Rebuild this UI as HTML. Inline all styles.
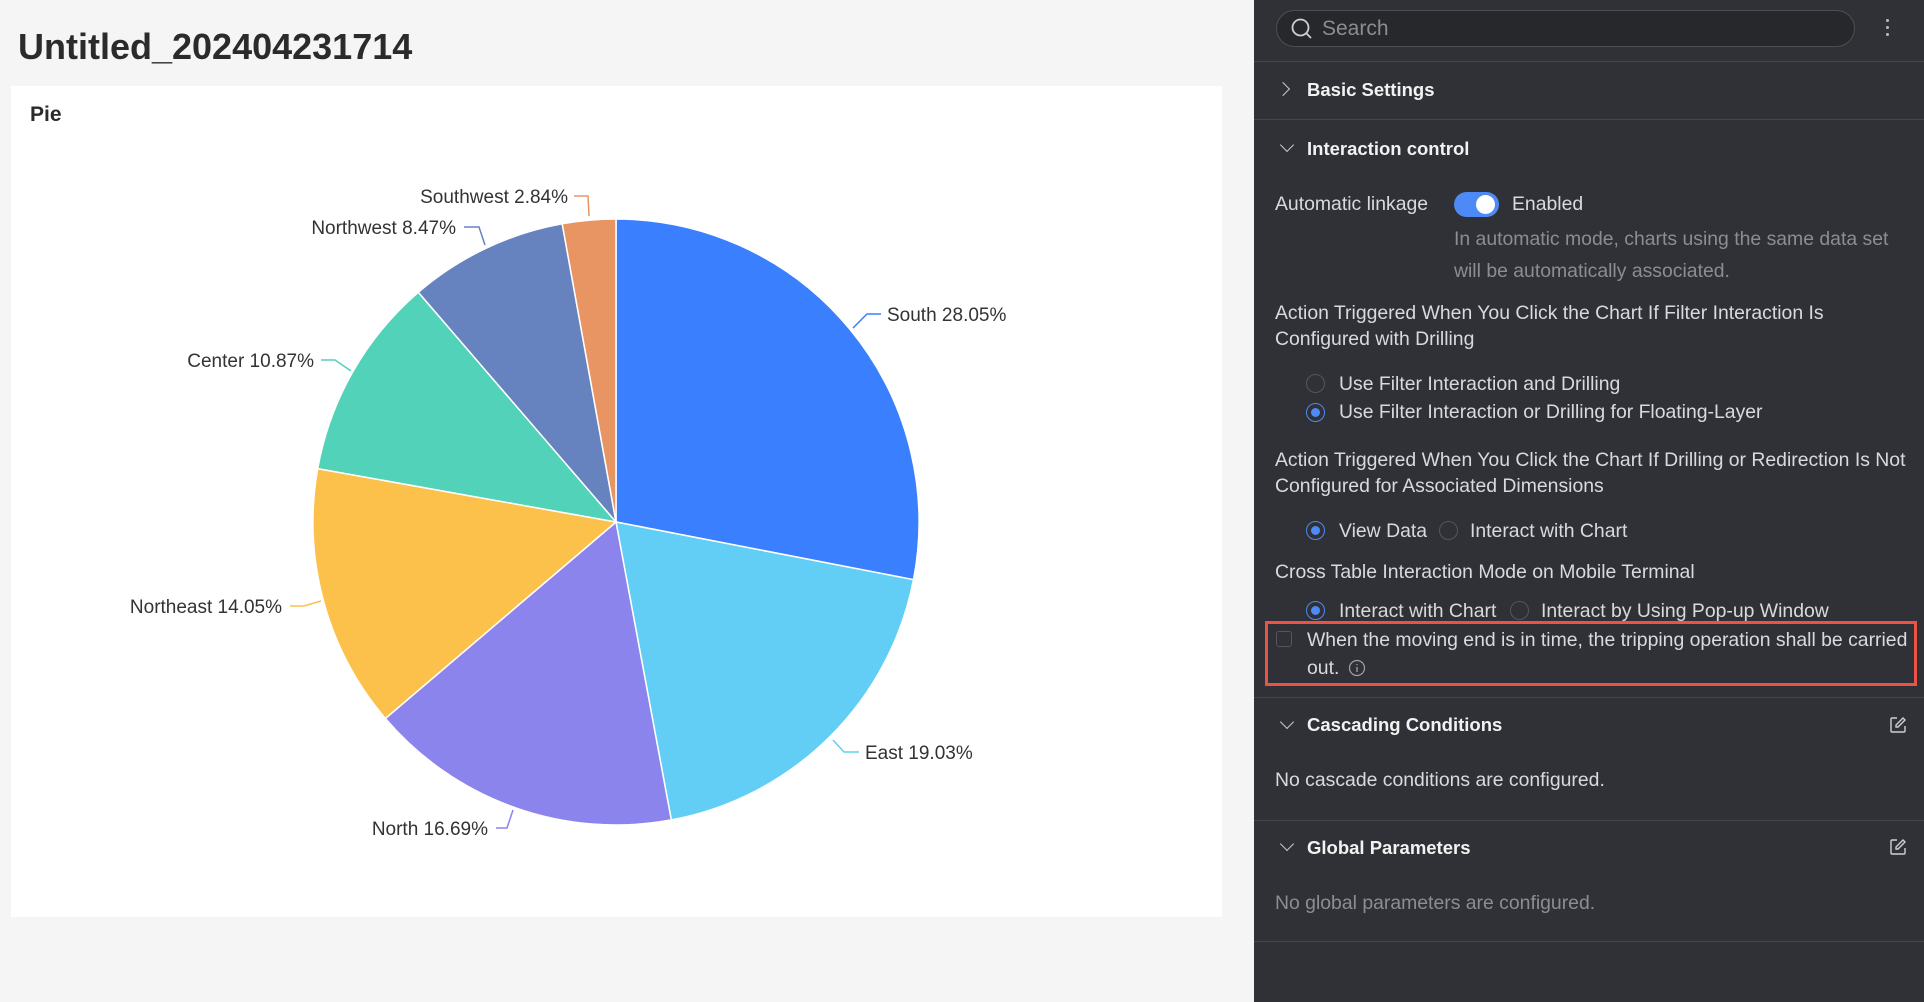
<!DOCTYPE html>
<html><head><meta charset="utf-8">
<style>
*{margin:0;padding:0;box-sizing:border-box}
body{width:1924px;height:1002px;overflow:hidden;background:#f5f5f5;font-family:"Liberation Sans",sans-serif;position:relative}
.a{position:absolute;white-space:nowrap;line-height:22px;height:22px}
#panel{position:absolute;left:1254px;top:0;width:670px;height:1002px;background:#303136}
#panel .a{color:#d9dadd;font-size:19.4px}
#panel .a.h{font-weight:bold;color:#f2f2f3;font-size:18.5px}
#panel .a.g{color:#8c8d92}
.ln{position:absolute;left:0;width:670px;height:1px;background:#45464b}
.rd{position:absolute;width:19px;height:19px;border-radius:50%;border:1.5px solid #55565b}
.rd.on{border-color:#4d8af6}
.rd.on::after{content:"";position:absolute;left:3.5px;top:3.5px;width:9px;height:9px;border-radius:50%;background:#4d8af6}
.chev{position:absolute;width:10px;height:10px;border-right:1.6px solid #c8c9cc;border-bottom:1.6px solid #c8c9cc}
</style></head><body>
<div class="a" style="left:18px;top:27px;height:40px;line-height:40px;font-size:36px;font-weight:bold;color:#2b2b2b">Untitled_202404231714</div>
<div style="position:absolute;left:11px;top:86px;width:1211px;height:831px;background:#fff"></div>
<div class="a" style="left:30px;top:104px;font-size:21px;font-weight:bold;color:#2b2b2b">Pie</div>
<svg style="position:absolute;left:0;top:0" width="1254" height="1002">
<g stroke="#fff" stroke-width="1.5">
<path d="M616,522 L616,219 A303,303 0 0 1 913.5,579.7 Z" fill="#3a7ffe"/>
<path d="M616,522 L913.5,579.7 A303,303 0 0 1 671.3,819.9 Z" fill="#62cdf5"/>
<path d="M616,522 L671.3,819.9 A303,303 0 0 1 385.4,718.5 Z" fill="#8b84ed"/>
<path d="M616,522 L385.4,718.5 A303,303 0 0 1 317.7,468.6 Z" fill="#fcc14a"/>
<path d="M616,522 L317.7,468.6 A303,303 0 0 1 418.3,292.3 Z" fill="#52d2b9"/>
<path d="M616,522 L418.3,292.3 A303,303 0 0 1 562.2,223.8 Z" fill="#6683c0"/>
<path d="M616,522 L562.2,223.8 A303,303 0 0 1 616,219 Z" fill="#e89563"/>
</g>
<g fill="none" stroke-width="1.5">
<path d="M574,196 L588,196 L589,216" stroke="#e89563"/>
<path d="M464,227 L479,227 L485,245" stroke="#6683c0"/>
<path d="M321,360 L335,360 L351,371" stroke="#52d2b9"/>
<path d="M290,606 L304,606 L321,601" stroke="#fcc14a"/>
<path d="M496,828 L507,828 L513,810" stroke="#8b84ed"/>
<path d="M833,740 L844,752 L859,752" stroke="#62cdf5"/>
<path d="M853,328 L867,314 L881,314" stroke="#3a7ffe"/>
</g>
<g font-family="Liberation Sans, sans-serif" font-size="19" fill="#333">
<text x="568" y="203" text-anchor="end">Southwest 2.84%</text>
<text x="456" y="234" text-anchor="end">Northwest 8.47%</text>
<text x="314" y="367" text-anchor="end">Center 10.87%</text>
<text x="282" y="613" text-anchor="end">Northeast 14.05%</text>
<text x="488" y="835" text-anchor="end">North 16.69%</text>
<text x="865" y="759">East 19.03%</text>
<text x="887" y="321">South 28.05%</text>
</g>
</svg>

<div id="panel">
<div style="position:absolute;left:22px;top:10px;width:579px;height:37px;border-radius:19px;background:#27282c;border:1px solid #4d4e53"></div>
<svg style="position:absolute;left:36px;top:17px" width="24" height="24" viewBox="0 0 24 24"><circle cx="10.5" cy="10.5" r="8" fill="none" stroke="#cfd0d3" stroke-width="1.8"/><path d="M16.5 16.5L21 21" stroke="#cfd0d3" stroke-width="1.8"/></svg>
<div class="a g" style="left:68px;top:18px;font-size:21px!important">Search</div>
<div style="position:absolute;left:632px;top:19px;width:3px;height:3px;background:#bbb;border-radius:50%;box-shadow:0 7px 0 #bbb,0 14px 0 #bbb"></div>
<div class="ln" style="top:61px"></div>
<div class="chev" style="left:24px;top:84px;transform:rotate(-45deg)"></div>
<div class="a h" style="left:53px;top:79px">Basic Settings</div>
<div class="ln" style="top:119px"></div>
<div class="chev" style="left:28px;top:140px;transform:rotate(45deg)"></div>
<div class="a h" style="left:53px;top:138px">Interaction control</div>
<div class="a" style="left:21px;top:193px">Automatic linkage</div>
<div style="position:absolute;left:200px;top:192px;width:45px;height:25px;border-radius:13px;background:#4d8af6"></div>
<div style="position:absolute;left:222px;top:195px;width:19px;height:19px;border-radius:50%;background:#fff"></div>
<div class="a" style="left:258px;top:193px">Enabled</div>
<div class="a g" style="left:200px;top:228px">In automatic mode, charts using the same data set</div>
<div class="a g" style="left:200px;top:260px">will be automatically associated.</div>
<div class="a" style="left:21px;top:302px">Action Triggered When You Click the Chart If Filter Interaction Is</div>
<div class="a" style="left:21px;top:328px">Configured with Drilling</div>
<div class="rd" style="left:52px;top:374px"></div>
<div class="a" style="left:85px;top:373px">Use Filter Interaction and Drilling</div>
<div class="rd on" style="left:52px;top:403px"></div>
<div class="a" style="left:85px;top:401px">Use Filter Interaction or Drilling for Floating-Layer</div>
<div class="a" style="left:21px;top:449px">Action Triggered When You Click the Chart If Drilling or Redirection Is Not</div>
<div class="a" style="left:21px;top:475px">Configured for Associated Dimensions</div>
<div class="rd on" style="left:52px;top:521px"></div>
<div class="a" style="left:85px;top:520px">View Data</div>
<div class="rd" style="left:185px;top:521px"></div>
<div class="a" style="left:216px;top:520px">Interact with Chart</div>
<div class="a" style="left:21px;top:561px">Cross Table Interaction Mode on Mobile Terminal</div>
<div class="rd on" style="left:52px;top:601px"></div>
<div class="a" style="left:85px;top:600px">Interact with Chart</div>
<div class="rd" style="left:256px;top:601px"></div>
<div class="a" style="left:287px;top:600px">Interact by Using Pop-up Window</div>
<div style="position:absolute;left:11px;top:621px;width:652px;height:65px;border:3px solid #ec5346"></div>
<div style="position:absolute;left:22px;top:631px;width:16px;height:16px;border:1.5px solid #55565b;border-radius:3px"></div>
<div class="a" style="left:53px;top:629px">When the moving end is in time, the tripping operation shall be carried</div>
<div class="a" style="left:53px;top:657px">out.</div>
<svg style="position:absolute;left:94px;top:659px" width="18" height="18" viewBox="0 0 18 18"><circle cx="9" cy="9" r="7.5" fill="none" stroke="#a0a1a5" stroke-width="1.2"/><path d="M9 8v5M9 5v1.3" stroke="#a0a1a5" stroke-width="1.3"/></svg>
<div class="ln" style="top:697px"></div>
<div class="chev" style="left:28px;top:717px;transform:rotate(45deg)"></div>
<div class="a h" style="left:53px;top:714px">Cascading Conditions</div>
<svg style="position:absolute;left:635px;top:716px" width="18" height="18" viewBox="0 0 18 18" fill="none" stroke="#cfd0d3" stroke-width="1.4"><path d="M8 2H3a1 1 0 0 0-1 1v12a1 1 0 0 0 1 1h12a1 1 0 0 0 1-1V10"/><path d="M14 2l2 2-7 7H7V9z"/></svg>
<div class="a" style="left:21px;top:769px">No cascade conditions are configured.</div>
<div class="ln" style="top:820px"></div>
<div class="chev" style="left:28px;top:839px;transform:rotate(45deg)"></div>
<div class="a h" style="left:53px;top:837px">Global Parameters</div>
<svg style="position:absolute;left:635px;top:838px" width="18" height="18" viewBox="0 0 18 18" fill="none" stroke="#cfd0d3" stroke-width="1.4"><path d="M8 2H3a1 1 0 0 0-1 1v12a1 1 0 0 0 1 1h12a1 1 0 0 0 1-1V10"/><path d="M14 2l2 2-7 7H7V9z"/></svg>
<div class="a g" style="left:21px;top:892px">No global parameters are configured.</div>
<div class="ln" style="top:941px"></div>
</div>
</body></html>
